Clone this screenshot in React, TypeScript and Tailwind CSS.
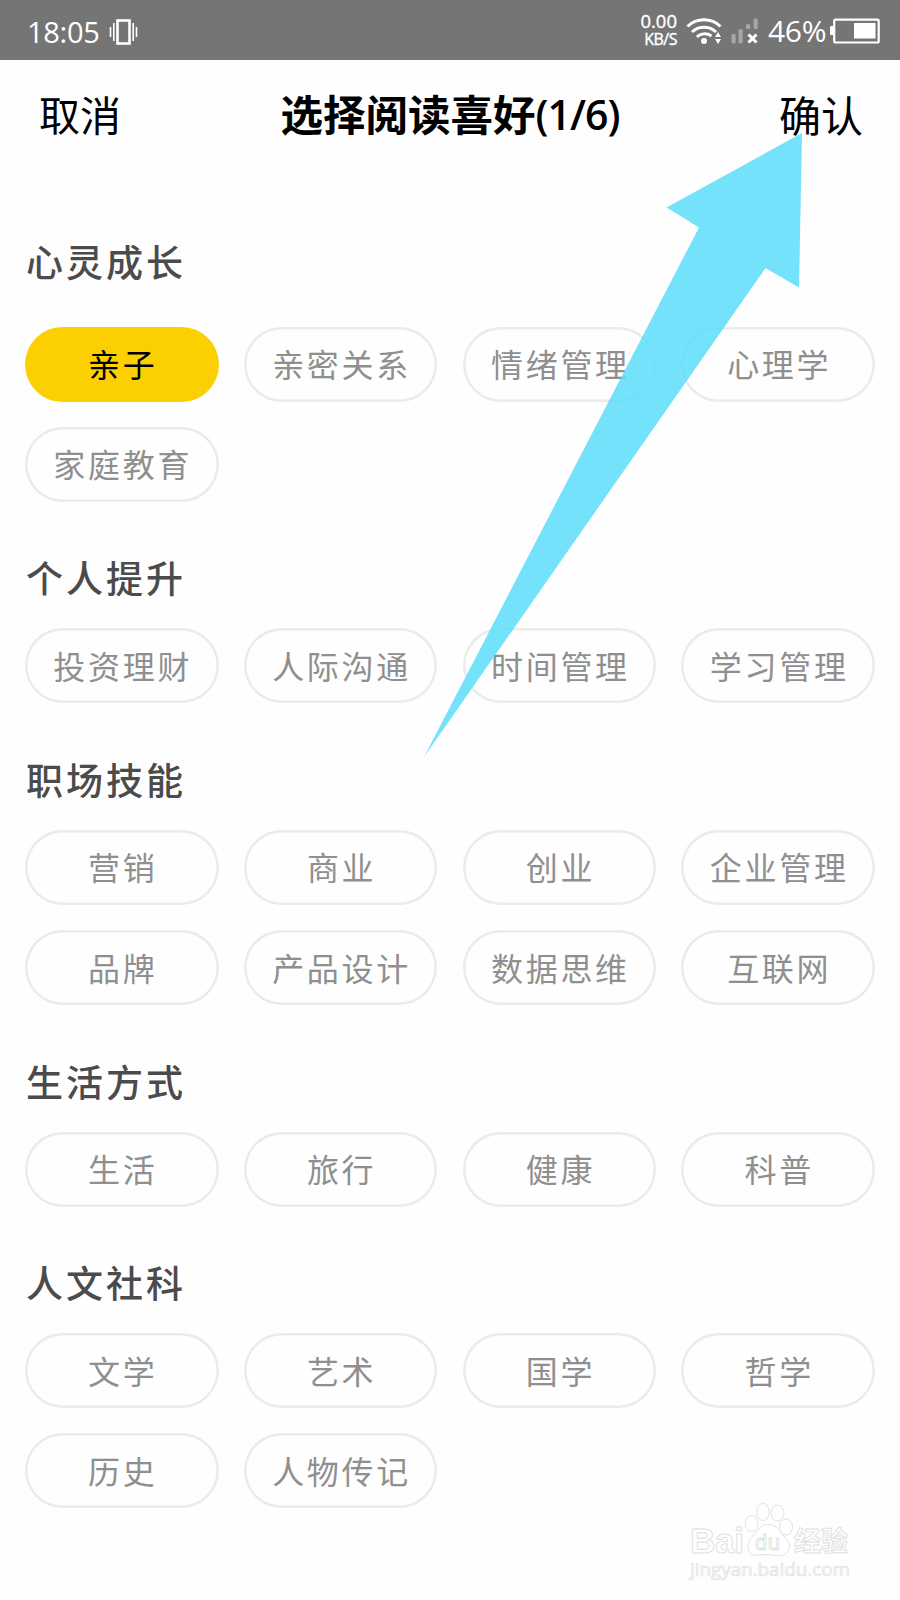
import { Fragment } from "react";

const groups = [
  { title: "心灵成长", tags: ["亲子", "亲密关系", "情绪管理", "心理学", "家庭教育"] },
  { title: "个人提升", tags: ["投资理财", "人际沟通", "时间管理", "学习管理"] },
  {
    title: "职场技能",
    tags: ["营销", "商业", "创业", "企业管理", "品牌", "产品设计", "数据思维", "互联网"],
  },
  { title: "生活方式", tags: ["生活", "旅行", "健康", "科普"] },
  { title: "人文社科", tags: ["文学", "艺术", "国学", "哲学", "历史", "人物传记"] },
];

function StatusBar() {
  return (
    <div className="flex h-[60px] items-center bg-[#757575] pl-[27px] pr-5 font-['Open_Sans',sans-serif] text-white">
      <span className="w-[73px] whitespace-nowrap pt-[2px] text-[29px] leading-none tracking-[-0.3px]">18:05</span>
      {/* Vibrate */}
      <svg className="ml-[9px] mt-[3px]" width="29" height="26" viewBox="0 0 29 26" fill="none" stroke="#fff">
        <rect x="8.5" y="1.5" width="12" height="23" strokeWidth="2.6" />
        <path d="M4.8 4v18M24.2 4v18" strokeWidth="1.6" />
        <path d="M1.5 8v10M27.5 8v10" strokeWidth="1.6" />
      </svg>

      <div className="ml-auto flex w-[42px] flex-col items-end whitespace-nowrap">
        <span className="text-[18.5px] leading-[18px] [-webkit-text-stroke:0.4px_#fff]">0.00</span>
        <span className="text-[16px] leading-[18px] tracking-[-0.5px] [-webkit-text-stroke:0.4px_#fff]">KB/S</span>
      </div>
      {/* Wifi */}
      <svg className="ml-[9px] mt-[2px]" width="36" height="28" viewBox="0 0 36 28" fill="none" stroke="#fff" strokeWidth="3">
        <path d="M1.5 9.5C10.5 0.5 25.5 0.5 34.5 9.5" />
        <path d="M6 15C12.5 8.5 23.5 8.5 30 15" />
        <path d="M11 20C15 16 21 16 25.5 19" />
        <circle cx="18" cy="24" r="3" fill="#fff" stroke="none" />
        <path d="M29 20l3-5 3 5zM29 22l3 5 3-5z" fill="#fff" stroke="none" />
      </svg>
      {/* Signal */}
      <svg className="ml-[9px] mt-[2px]" width="28" height="26" viewBox="0 0 28 26">
        <g fill="#a6a6a6">
          <rect x="0.5" y="16" width="4.2" height="9.5" rx="1.5" />
          <rect x="7.5" y="11" width="4.2" height="14.5" rx="1.5" />
          <rect x="15" y="6" width="4.2" height="5" rx="1.5" />
          <rect x="22.5" y="0.5" width="4.2" height="10.5" rx="1.5" />
        </g>
        <path d="M17.5 16.5l8 8M25.5 16.5l-8 8" stroke="#fff" strokeWidth="3" />
      </svg>
      <span className="ml-[9px] w-[60px] whitespace-nowrap pt-[2px] text-[30px] leading-none tracking-[-0.3px]">46%</span>
      {/* Battery */}
      <svg className="ml-[2px] mt-[2px]" width="50" height="26" viewBox="0 0 50 26">
        <rect x="4.2" y="1.7" width="44.5" height="22.8" rx="1.5" fill="none" stroke="#fff" strokeWidth="2.2" />
        <rect x="0" y="8" width="4" height="9" rx="1" fill="#fff" />
        <rect x="24" y="5" width="21.5" height="15.5" fill="#fff" />
      </svg>
    </div>
  );
}

function Header() {
  return (
    <header className="flex h-[110px] items-center justify-between pr-[37px] pb-[3px] pl-[39px] text-black">
      <button className="text-[41px] leading-none">取消</button>
      <h1 className="flex items-center whitespace-nowrap text-[42.5px] leading-none font-bold">
        选择阅读喜好
        <span className="pt-[1px] font-['Open_Sans',sans-serif] text-[41px] font-semibold tracking-[-1px]">(1/6)</span>
      </h1>
      <button className="text-[42px] leading-none">确认</button>
    </header>
  );
}

function Tag({ label, active }: { label: string; active: boolean }) {
  return (
    <button
      className={
        "flex h-[75px] items-center justify-center rounded-full pb-[2px] pl-[2px] text-[32px] leading-none tracking-[2.7px] " +
        (active ? "bg-[#fcd000] text-black" : "text-[#8f8f8f] shadow-[inset_0_0_0_2.5px_#ebebeb]")
      }
    >
      {label}
    </button>
  );
}

function Watermark() {
  return (
    <svg
      className="absolute top-[1500px] left-[686px]"
      width="180"
      height="92"
      viewBox="0 0 180 92"
      fill="#fff"
      stroke="#dedede"
      strokeWidth="0.9"
    >
      <text x="4" y="53" fontFamily="Liberation Sans" fontWeight="bold" fontSize="35" textLength="54">Bai</text>
      <ellipse cx="65.5" cy="23.5" rx="6.5" ry="8" />
      <ellipse cx="77" cy="12" rx="6.2" ry="8.5" />
      <ellipse cx="91.5" cy="13" rx="6.5" ry="8" />
      <ellipse cx="100" cy="27" rx="6.5" ry="8" />
      <path d="M82 24.5c-6 0-9 4-12 8-4 5-8 8-8 14 0 7 5 9 10 8.5 6-.5 13-.5 19 .5 6 1 12-2 12.5-9 0-6-5-9-8.500-14-3-4.500-7-8-13-8z" />
      <text x="69" y="50" fontFamily="Liberation Sans" fontSize="22" textLength="25">du</text>
      <text x="108" y="51" fontFamily="Noto Sans CJK SC, sans-serif" fontWeight="bold" fontSize="27">经验</text>
      <text x="4" y="75.5" fontFamily="Open Sans" fontSize="18.5" textLength="160" lengthAdjust="spacingAndGlyphs" strokeWidth="0.7">
        jingyan.baidu.com
      </text>
    </svg>
  );
}

export default function App() {
  return (
    <div className="relative h-[1600px] w-[900px] overflow-hidden bg-[#fefefe] font-['Noto_Sans_CJK_SC',sans-serif]">
      <StatusBar />
      <Header />

      <main className="px-[25px] pt-[66px]">
        {groups.map((group, i) => (
          <Fragment key={group.title}>
            <h2
              className={
                "pl-[1px] text-[37px] leading-[50px] font-medium tracking-[3px] text-[#4b4b4b] " +
                (i === 0 ? "mb-[40.5px]" : "mt-[50.5px] mb-[26.1px]")
              }
            >
              {group.title}
            </h2>
            <div className="grid grid-cols-4 gap-x-[25.3px] gap-y-[25.2px]">
              {group.tags.map((tag) => (
                <Tag key={tag} label={tag} active={tag === "亲子"} />
              ))}
            </div>
          </Fragment>
        ))}
      </main>

      {/* Arrow pointing at the confirm button */}
      <svg className="pointer-events-none absolute top-0 left-0" width="900" height="800" viewBox="0 0 900 800">
        <path
          d="M802 133L666.5 207.5L699 227.5L424 757L765.5 268L799 287.5Z"
          fill="#58dcf9"
          fillOpacity="0.84"
        />
      </svg>

      <Watermark />
    </div>
  );
}
